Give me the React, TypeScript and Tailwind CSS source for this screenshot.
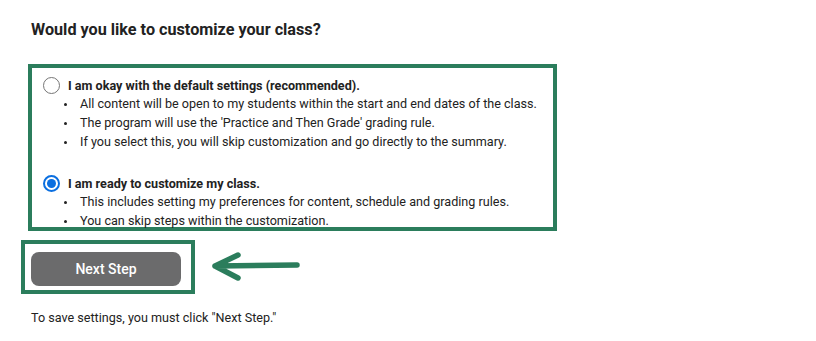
import React, { useState } from 'react'

type Option = {
  id: string
  label: string
  points: string[]
}

const options: Option[] = [
  {
    id: 'default',
    label: 'I am okay with the default settings (recommended).',
    points: [
      'All content will be open to my students within the start and end dates of the class.',
      "The program will use the 'Practice and Then Grade' grading rule.",
      'If you select this, you will skip customization and go directly to the summary.',
    ],
  },
  {
    id: 'custom',
    label: 'I am ready to customize my class.',
    points: [
      'This includes setting my preferences for content, schedule and grading rules.',
      'You can skip steps within the customization.',
    ],
  },
]

function Radio({ checked }: { checked: boolean }) {
  return checked ? (
    <span className="flex h-[17px] w-[17px] shrink-0 items-center justify-center rounded-full border-2 border-[#0b6fe0] bg-white">
      <span className="h-[9px] w-[9px] rounded-full bg-[#0b6fe0]" />
    </span>
  ) : (
    <span className="h-[17px] w-[17px] shrink-0 rounded-full border-[1.5px] border-[#767676] bg-white" />
  )
}

export default function App() {
  const [selected, setSelected] = useState('custom')

  return (
    <div className="min-h-[341px] w-[816px] bg-white pl-[21px] pt-[18px] font-['Roboto',sans-serif] text-[#222]">
      <h2 className="ml-[10px] text-[16.2px] font-bold leading-6 text-[#222]">
        Would you like to customize your class?
      </h2>

      {/* Options */}
      <div className="ml-[7px] mt-[22px] h-[167px] w-[529px] border-4 border-[#2b7d5c] pl-[11px] pt-[9px]">
        {options.map((opt, i) => (
          <div key={opt.id} className={i > 0 ? 'mt-[24px]' : ''}>
            <label
              className="flex cursor-pointer items-center gap-[8px]"
              onClick={() => setSelected(opt.id)}
            >
              <Radio checked={selected === opt.id} />
              <span className="text-[12.6px] font-bold leading-[17px] text-[#222]">{opt.label}</span>
            </label>
            <ul className="ml-[34px] list-disc text-[12.6px] leading-[19px] text-[#222] marker:text-[10px]">
              {opt.points.map(p => (
                <li key={p} className="pl-[3px]">{p}</li>
              ))}
            </ul>
          </div>
        ))}
      </div>

      {/* Next step + arrow */}
      <div className="mt-[9px] flex items-center">
        <div className="h-[54px] w-[174px] border-4 border-[#2b7d5c] pl-[6px] pt-[8px]">
          <button className="h-[34px] w-[150px] rounded-[8px] bg-[#6b6b6c] text-[14px] font-medium text-white">
            Next Step
          </button>
        </div>
        <svg width="92" height="34" viewBox="0 0 92 34" className="ml-[16px] mt-[2px]">
          <path
            d="M4 15 L86 14 M4 15 L27 4 M4 15 L27 27"
            fill="none"
            stroke="#2b7d5c"
            strokeWidth="5.5"
            strokeLinecap="round"
            strokeLinejoin="round"
          />
        </svg>
      </div>

      <p className="ml-[10px] mt-[16px] text-[12.6px] leading-4 text-[#222]">
        To save settings, you must click "Next Step."
      </p>
    </div>
  )
}
